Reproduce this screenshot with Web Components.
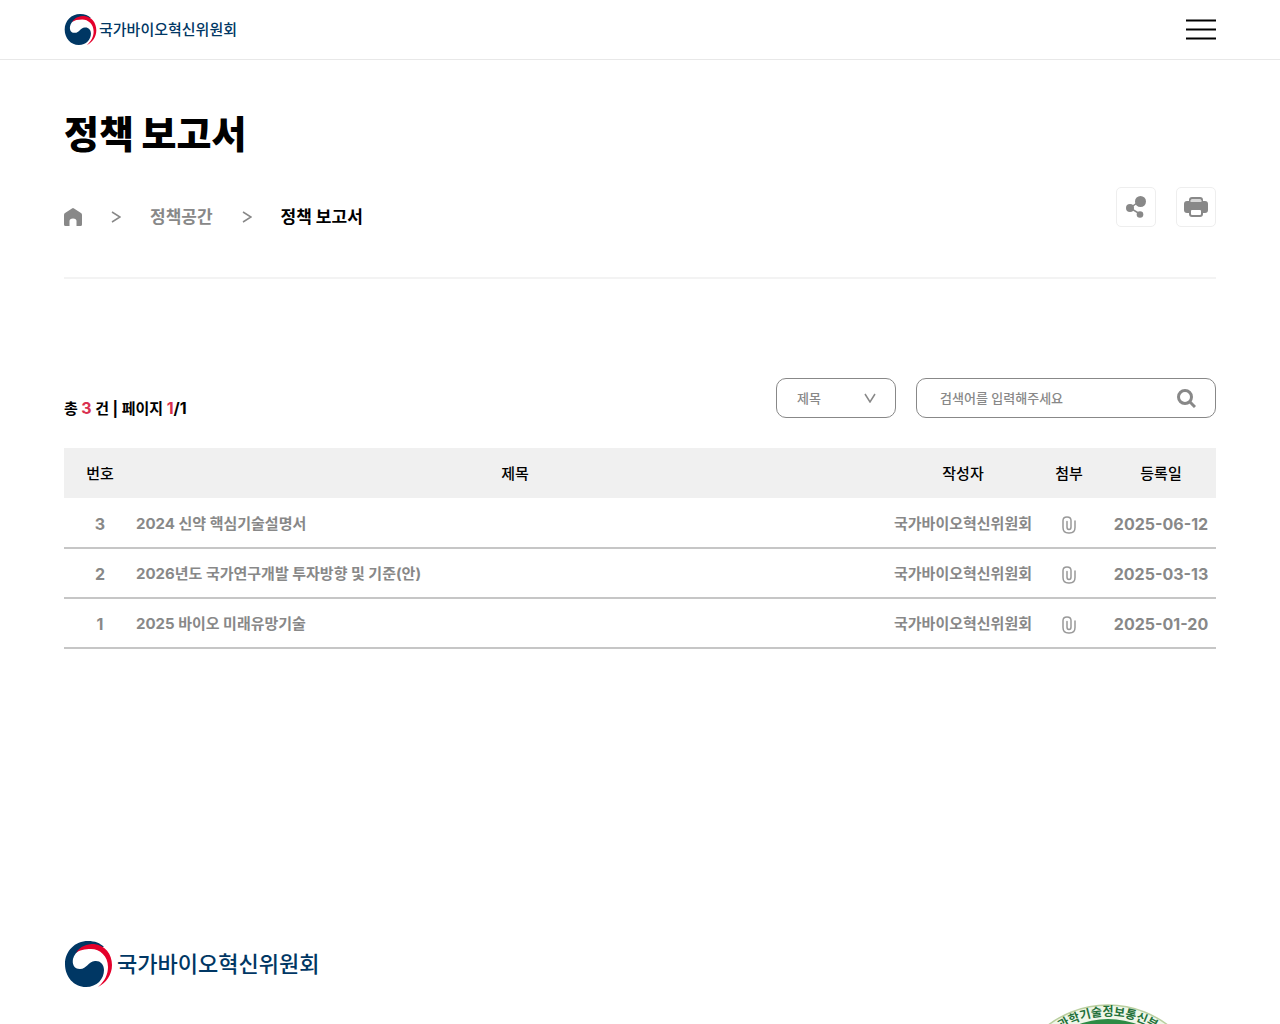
<!DOCTYPE html>
<html lang="ko">
<head>
<meta charset="utf-8">
<meta name="viewport" content="width=device-width, initial-scale=1">
<title>정책 보고서 | 국가바이오혁신위원회</title>
<style>
  :root {
    --black: #000;
    --gray: #888;
    --line: #c6c6c6;
    --pale: #f0f0f0;
    --navy: #003764;
    --red: #d9304f;
  }

  body {
    margin: 0;
    background: #fff;
    color: var(--black);
    font-family: Inter, "Noto Sans CJK KR", sans-serif;
    font-size: 15px;
    line-height: 24px;
  }

  main {
    padding: 46px 5% 0;
  }
</style>
</head>
<body>
<site-header></site-header>
<main>
  <page-heading>
    <span slot="title">정책 보고서</span>
    <span slot="parent">정책공간</span>
    <span slot="current">정책 보고서</span>
  </page-heading>
  <board-search total="3" page="1" pages="1"></board-search>
  <board-list></board-list>
</main>
<site-footer></site-footer>

<script>
class BrandLogo extends HTMLElement {
  connectedCallback() {
    this.attachShadow({ mode: "open" });

    this.shadowRoot.innerHTML = `
      <style>
        :host {
          display: block;
        }

        a {
          display: flex;
          align-items: center;
          gap: 2px;
          color: var(--navy);
          font-size: 15px;
          font-weight: 500;
          text-decoration: none;
          white-space: nowrap;
        }

        svg {
          width: 33px;
          height: 33px;
        }

        :host([large]) a {
          gap: 4px;
          font-size: 22px;
        }

        :host([large]) svg {
          width: 49px;
          height: 48px;
        }
      </style>

      <a href="#">
        <svg viewBox="-1 -1 49 48" aria-hidden="true">
          <path fill="#003764" d="M39 6C35 2 30 0 23 0C10 0 0 10 0 23C0 36 9 46 21 46C32 46 39 38 39 29C39 23 35 19.500 30 20C23 20.500 22 28 15 28C9 28 7 23 8 18C10 10 18 6 27 6Z"/>
          <path fill="#e4002b" d="M11 12C15 5 22 3 29 3C40 4 47 13 47 24C47 34 41 42 33 46C40 40 43 33 43 26C43 15 35 8 26 8C20 8 14 9 11 12Z"/>
        </svg>
        <span>국가바이오혁신위원회</span>
      </a>
    `;
  }
}

class SiteHeader extends HTMLElement {
  connectedCallback() {
    this.attachShadow({ mode: "open" });

    this.shadowRoot.innerHTML = `
      <style>
        :host {
          display: block;
          border-bottom: 1px solid #e8e8e8;
        }

        header {
          display: flex;
          justify-content: space-between;
          align-items: center;
          height: 59px;
          padding: 0 5%;
        }

        button {
          display: block;
          padding: 0;
          border: none;
          background: none;
          cursor: pointer;
        }

        svg {
          display: block;
        }
      </style>

      <header>
        <brand-logo></brand-logo>
        <button type="button" aria-label="전체메뉴">
          <svg width="30" height="23" viewBox="0 0 30 23" stroke="#000" stroke-width="2">
            <path d="M0 2.5H30M0 11.5H30M0 20.5H30"/>
          </svg>
        </button>
      </header>
    `;
  }
}

class PageHeading extends HTMLElement {
  connectedCallback() {
    this.attachShadow({ mode: "open" });

    this.shadowRoot.innerHTML = `
      <style>
        :host {
          display: block;
          border-bottom: 2px solid #f3f3f3;
          padding-bottom: 50px;
        }

        h1 {
          margin: 0 0 25px;
          font-size: 38px;
          line-height: 56px;
          font-weight: 900;
        }

        .row {
          display: flex;
          justify-content: space-between;
          align-items: flex-end;
        }

        nav {
          display: flex;
          align-items: center;
          gap: 29px;
          font-size: 17px;
          line-height: 20px;
          font-weight: 700;
        }

        nav a {
          color: var(--gray);
          text-decoration: none;
        }

        .tools {
          display: flex;
          gap: 20px;
        }

        button {
          display: grid;
          place-items: center;
          width: 40px;
          height: 40px;
          padding: 0;
          border: 1px solid #eee;
          border-radius: 5px;
          background: #fff;
          cursor: pointer;
        }

        svg {
          display: block;
        }
      </style>

      <h1><slot name="title"></slot></h1>
      <div class="row">
        <nav aria-label="현재 위치">
          <a href="#" aria-label="홈">
            <svg width="18" height="18" viewBox="0 0 18 18" fill="#888">
              <path d="M8 .4Q9-.3 10 .4L17 5Q18 5.700 18 7V16.500Q18 18 16.500 18H12.500V13Q12.500 10.500 9 10.500T5.500 13V18H1.500Q0 18 0 16.500V7Q0 5.700 1 5Z"/>
            </svg>
          </a>
          <svg width="10" height="12" viewBox="0 0 10 12" fill="none" stroke="#888" stroke-width="1.5"><path d="M1 1L9 6L1 11"/></svg>
          <a href="#"><slot name="parent"></slot></a>
          <svg width="10" height="12" viewBox="0 0 10 12" fill="none" stroke="#888" stroke-width="1.5"><path d="M1 1L9 6L1 11"/></svg>
          <slot name="current"></slot>
        </nav>
        <div class="tools">
          <button type="button" aria-label="공유">
            <svg width="22" height="24" viewBox="0 0 22 24" fill="#888">
              <path d="M15 6L5 13L15 19" fill="none" stroke="#888" stroke-width="1.5"/>
              <circle cx="15.500" cy="6.500" r="5.500"/>
              <circle cx="5" cy="13" r="4"/>
              <circle cx="15" cy="19.500" r="3.300"/>
            </svg>
          </button>
          <button type="button" aria-label="인쇄">
            <svg width="24" height="20" viewBox="0 0 24 20">
              <rect x="6" y="1" width="12" height="7" rx="2" fill="#d8d8d8" stroke="#888" stroke-width="2"/>
              <rect x="0" y="4" width="24" height="12" rx="3" fill="#888"/>
              <path d="M6.500 4H17.500" stroke="#d8d8d8" stroke-width="2"/>
              <rect x="6" y="12" width="12" height="7" rx="2" fill="#fff" stroke="#888" stroke-width="2"/>
            </svg>
          </button>
        </div>
      </div>
    `;
  }
}

class BoardSearch extends HTMLElement {
  connectedCallback() {
    this.attachShadow({ mode: "open" });

    this.shadowRoot.innerHTML = `
      <style>
        :host {
          display: flex;
          justify-content: space-between;
          align-items: flex-end;
          margin: 99px 0 30px;
        }

        p {
          margin: 0;
          line-height: 18px;
          font-weight: 700;
        }

        em {
          color: var(--red);
          font-style: normal;
        }

        .num {
          font-size: 16px;
        }

        form {
          display: flex;
          gap: 20px;
        }

        .box {
          display: flex;
          align-items: center;
          box-sizing: border-box;
          height: 40px;
          border: 1px solid var(--gray);
          border-radius: 10px;
        }

        .type {
          display: grid;
          width: 120px;
        }

        .type > * {
          grid-area: 1 / 1;
        }

        .type svg {
          justify-self: end;
          margin-right: 19px;
          pointer-events: none;
        }

        .keyword {
          width: 300px;
          padding: 0 19px 0 23px;
        }

        select,
        input {
          min-width: 0;
          margin: 0;
          border: none;
          outline: none;
          background: none;
          color: var(--gray);
          font: inherit;
          font-size: 13px;
          font-weight: 500;
          appearance: none;
        }

        select {
          width: 100%;
          height: 38px;
          padding: 0 20px;
        }

        input {
          flex: 1;
          padding: 0;
        }

        input::placeholder {
          color: var(--gray);
        }

        button {
          padding: 0;
          border: none;
          background: none;
          cursor: pointer;
        }

        svg {
          display: block;
        }
      </style>

      <p>총 <em class="num">${this.getAttribute("total")}</em> 건 | 페이지 <span class="num"><em>${this.getAttribute("page")}</em>/${this.getAttribute("pages")}</span></p>
      <form>
        <div class="box type">
          <select aria-label="검색 구분">
            <option>제목</option>
          </select>
          <svg width="12" height="10" viewBox="0 0 12 10" fill="none" stroke="#888" stroke-width="1.5"><path d="M1 1L6 9L11 1"/></svg>
        </div>
        <div class="box keyword">
          <input type="text" aria-label="검색어" placeholder="검색어를 입력해주세요">
          <button type="submit" aria-label="검색">
            <svg width="19" height="19" viewBox="0 0 19 19" fill="none" stroke="#888" stroke-width="3">
              <circle cx="8" cy="8" r="6.500"/>
              <path d="M12.500 12.500L18 18"/>
            </svg>
          </button>
        </div>
      </form>
    `;

    this.shadowRoot.querySelector("form").addEventListener("submit", (e) => e.preventDefault());
  }
}

class BoardList extends HTMLElement {
  connectedCallback() {
    this.attachShadow({ mode: "open" });

    const posts = [
      { no: 3, title: "2024 신약 핵심기술설명서", date: "2025-06-12" },
      { no: 2, title: "2026년도 국가연구개발 투자방향 및 기준(안)", date: "2025-03-13" },
      { no: 1, title: "2025 바이오 미래유망기술", date: "2025-01-20" }
    ];

    const rows = posts.map(post => `
      <tr>
        <td class="num">${post.no}</td>
        <td class="title"><a href="#">${post.title}</a></td>
        <td>국가바이오혁신위원회</td>
        <td>
          <svg role="img" aria-label="첨부파일" width="14" height="18" viewBox="0 0 14 18" fill="none" stroke="#999" stroke-width="1.500" stroke-linecap="round">
            <path d="M13 5V11.500Q13 17 7.500 17H6.500Q1 17 1 11.500V4.500Q1 1 5 1T9 4.500V11Q9 13.500 7 13.500T5 11V5.500"/>
          </svg>
        </td>
        <td class="num">${post.date}</td>
      </tr>
    `).join("");

    this.shadowRoot.innerHTML = `
      <style>
        :host {
          display: block;
        }

        table {
          width: 100%;
          border-collapse: collapse;
          table-layout: fixed;
        }

        .col-no {
          width: 72px;
        }

        .col-author {
          width: 138px;
        }

        .col-file {
          width: 74px;
        }

        .col-date {
          width: 110px;
        }

        th,
        td {
          box-sizing: border-box;
          height: 50px;
          padding: 2px 0 0;
          text-align: center;
          white-space: nowrap;
        }

        th {
          background: var(--pale);
          font-weight: 500;
        }

        td {
          border-bottom: 2px solid var(--line);
          color: var(--gray);
          font-weight: 700;
        }

        .num {
          font-size: 16px;
        }

        .title {
          text-align: left;
        }

        a {
          color: inherit;
          text-decoration: none;
        }

        svg {
          display: block;
          margin: 2px auto 0;
        }
      </style>

      <table>
        <colgroup>
          <col class="col-no">
          <col>
          <col class="col-author">
          <col class="col-file">
          <col class="col-date">
        </colgroup>
        <thead>
          <tr>
            <th scope="col">번호</th>
            <th scope="col">제목</th>
            <th scope="col">작성자</th>
            <th scope="col">첨부</th>
            <th scope="col">등록일</th>
          </tr>
        </thead>
        <tbody>${rows}</tbody>
      </table>
    `;
  }
}

class SiteFooter extends HTMLElement {
  connectedCallback() {
    this.attachShadow({ mode: "open" });

    this.shadowRoot.innerHTML = `
      <style>
        :host {
          display: block;
          margin-top: 291px;
        }

        footer {
          display: flex;
          justify-content: space-between;
          align-items: flex-start;
          padding: 0 5% 40px;
        }

        .mark {
          display: block;
          width: 200px;
          margin: 64px 8px 0 0;
        }
      </style>

      <footer>
        <brand-logo large></brand-logo>
        <svg class="mark" viewBox="0 0 200 200">
          <defs>
            <path id="rim" d="M12 100A88 88 0 0 1 188 100"/>
          </defs>
          <circle cx="100" cy="100" r="99" fill="#eff7e9" stroke="#b9cf9f" stroke-width="1.500"/>
          <circle cx="100" cy="100" r="85" fill="#2c8b45"/>
          <text fill="#23713a" font-size="12" font-weight="700" text-anchor="middle">
            <textPath href="#rim" startOffset="50%">과학기술정보통신부</textPath>
          </text>
        </svg>
      </footer>
    `;
  }
}

customElements.define("brand-logo", BrandLogo);
customElements.define("site-header", SiteHeader);
customElements.define("page-heading", PageHeading);
customElements.define("board-search", BoardSearch);
customElements.define("board-list", BoardList);
customElements.define("site-footer", SiteFooter);
</script>
</body>
</html>
